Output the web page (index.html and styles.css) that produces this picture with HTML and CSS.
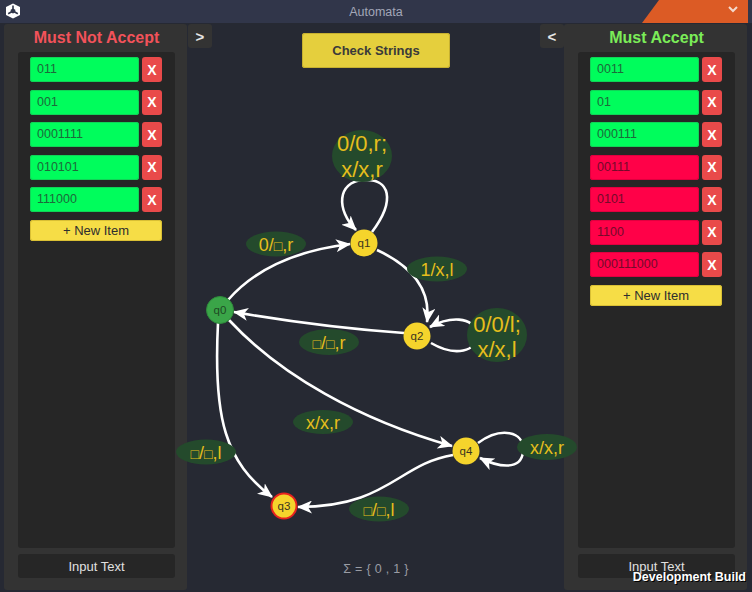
FILE: index.html
```html
<!DOCTYPE html>
<html>
<head>
<meta charset="utf-8">
<title>Automata</title>
<link rel="stylesheet" href="styles.css">
</head>
<body>
<div class="app">
  <header class="titlebar">
    <div class="tb-left">
      <svg class="logo" width="16" height="16" viewBox="0 0 16 16">
        <polygon points="8,0.5 15,4 15,12 8,15.5 1,12 1,4" fill="#ffffff"/>
        <polyline points="8,2.5 8,8 3.2,10.8" fill="none" stroke="#30364a" stroke-width="1.6"/>
        <line x1="8" y1="8" x2="12.8" y2="10.8" stroke="#30364a" stroke-width="1.6"/>
        <polygon points="8,5.5 10.3,6.8 10.3,9.3 8,10.6 5.7,9.3 5.7,6.8" fill="#30364a"/>
      </svg>
    </div>
    <div class="tb-title">Automata</div>
    <div class="tb-right">
      <div class="corner">
        <svg width="12" height="8" viewBox="0 0 12 8"><polyline points="2,2 6,6 10,2" fill="none" stroke="#f4d9cc" stroke-width="2"/></svg>
      </div>
    </div>
  </header>

  <main class="main">
    <section class="panel">
      <h2 class="panel-title reject">Must Not Accept</h2>
      <div class="list">
        <div class="item"><span class="field ok">011</span><button class="del">X</button></div>
        <div class="item"><span class="field ok">001</span><button class="del">X</button></div>
        <div class="item"><span class="field ok">0001111</span><button class="del">X</button></div>
        <div class="item"><span class="field ok">010101</span><button class="del">X</button></div>
        <div class="item"><span class="field ok">111000</span><button class="del">X</button></div>
        <button class="new-item">+ New Item</button>
      </div>
      <button class="input-text">Input Text</button>
    </section>

    <button class="toggle">&gt;</button>

    <div class="center">
      <button class="check">Check Strings</button>
      <div class="sigma">Σ = { 0 , 1 }</div>
    </div>

    <button class="toggle">&lt;</button>

    <section class="panel">
      <h2 class="panel-title accept">Must Accept</h2>
      <div class="list">
        <div class="item"><span class="field ok">0011</span><button class="del">X</button></div>
        <div class="item"><span class="field ok">01</span><button class="del">X</button></div>
        <div class="item"><span class="field ok">000111</span><button class="del">X</button></div>
        <div class="item"><span class="field bad">00111</span><button class="del">X</button></div>
        <div class="item"><span class="field bad">0101</span><button class="del">X</button></div>
        <div class="item"><span class="field bad">1100</span><button class="del">X</button></div>
        <div class="item"><span class="field bad">000111000</span><button class="del">X</button></div>
        <button class="new-item">+ New Item</button>
      </div>
      <button class="input-text">Input Text</button>
    </section>
  </main>

  <svg class="graph" width="752" height="592" viewBox="0 0 752 592">
    <defs>
      <marker id="arr" markerUnits="userSpaceOnUse" markerWidth="15" markerHeight="13" refX="14" refY="6.5" orient="auto">
        <path d="M0,0 L15,6.5 L0,13 L4,6.5 Z" fill="#ffffff"/>
      </marker>
    </defs>
    <g fill="none" stroke="#ffffff" stroke-width="2.6" marker-end="url(#arr)">
      <path d="M228 300 Q268 254 350 244"/>
      <path d="M372 232 C396 200 390 178 363 180 C337 182 336 210 356 230"/>
      <path d="M377 250 Q433 276 427 322"/>
      <path d="M431 343 C455 357 478 352 476 334 C474 315 448 317 430 327"/>
      <path d="M404 333 Q320 327 234 312"/>
      <path d="M229 320 C280 375 360 420 452 446"/>
      <path d="M218 323 C213 420 226 462 272 497"/>
      <path d="M478 443 C500 427 525 430 523 452 C521 471 498 467 480 458"/>
      <path d="M453 455 C398 464 388 507 298 507"/>
    </g>

    <g class="lbl">
      <ellipse cx="362" cy="156" rx="30" ry="26"/>
      <text x="362" y="151" class="big">0/0,r;</text>
      <text x="362" y="177" class="big">x/x,r</text>

      <ellipse cx="497" cy="335" rx="30" ry="27"/>
      <text x="497" y="332" class="big">0/0/l;</text>
      <text x="497" y="357" class="big">x/x,l</text>

      <ellipse cx="276" cy="244" rx="30" ry="12.5"/>
      <text x="276" y="251">0/<tspan class="sq">□</tspan>,r</text>

      <ellipse cx="437" cy="269" rx="30" ry="12.5"/>
      <text x="437" y="276">1/x,l</text>

      <ellipse cx="329" cy="342" rx="30" ry="13"/>
      <text x="329" y="349"><tspan class="sq">□</tspan>/<tspan class="sq">□</tspan>,r</text>

      <ellipse cx="323" cy="422" rx="30" ry="12"/>
      <text x="323" y="429">x/x,r</text>

      <ellipse cx="206" cy="452" rx="30" ry="12.5"/>
      <text x="206" y="459"><tspan class="sq">□</tspan>/<tspan class="sq">□</tspan>,l</text>

      <ellipse cx="547" cy="447" rx="30" ry="13"/>
      <text x="547" y="454">x/x,r</text>

      <ellipse cx="379" cy="509" rx="30" ry="12.5"/>
      <text x="379" y="516"><tspan class="sq">□</tspan>/<tspan class="sq">□</tspan>,l</text>
    </g>

    <g class="nodes">
      <circle cx="220" cy="310" r="13.5" fill="#3aa548" stroke="#2f8a3c" stroke-width="1"/>
      <text x="220" y="314" class="q0">q0</text>
      <circle cx="364" cy="243" r="13.5" fill="#f5d42c"/>
      <text x="364" y="247">q1</text>
      <circle cx="417" cy="336" r="13.5" fill="#f5d42c"/>
      <text x="417" y="340">q2</text>
      <circle cx="284" cy="506" r="12.5" fill="#f5d42c" stroke="#e8231e" stroke-width="2"/>
      <text x="284" y="510">q3</text>
      <circle cx="466" cy="451" r="13.5" fill="#f5d42c"/>
      <text x="466" y="455">q4</text>
    </g>
  </svg>

  <div class="devbuild">Development Build</div>
</div>
</body>
</html>
```

FILE: styles.css
```css
* { box-sizing: border-box; }
html, body { margin: 0; padding: 0; }
body {
  width: 752px;
  height: 592px;
  overflow: hidden;
  background: #262933;
  font-family: "Liberation Sans", Arial, sans-serif;
  color: #ddd;
}
button { font: inherit; border: none; padding: 0; cursor: pointer; }

.app { position: relative; width: 752px; height: 592px; display: flex; flex-direction: column; }

.titlebar {
  height: 23px;
  background: #31364a;
  display: grid;
  grid-template-columns: 1fr auto 1fr;
  align-items: stretch;
}
.tb-left { display: flex; align-items: center; padding-left: 5px; }
.logo { display: block; margin-top: -1px; }
.tb-title { display: flex; align-items: center; font-size: 12.5px; color: #a3a7b8; }
.tb-right { display: flex; justify-content: flex-end; padding-right: 4px; }
.corner {
  width: 106px;
  background: #dc5b25;
  clip-path: polygon(17px 0, 100% 0, 100% 100%, 0 100%);
  display: flex;
  align-items: center;
  justify-content: flex-end;
  padding-right: 9px;
  padding-bottom: 5px;
}
.corner svg { display: block; }

.main {
  flex: 1;
  display: flex;
  padding: 1px 5px 2px 4px;
}

.panel {
  width: 183px;
  background: #333333;
  border-radius: 3px;
  display: flex;
  flex-direction: column;
  padding: 0 12px 12px 14px;
}
.panel-title {
  margin: 0;
  height: 28px;
  line-height: 28px;
  text-align: center;
  font-size: 16px;
  font-weight: bold;
}
.reject { color: #f2525a; }
.accept { color: #7bec58; }

.list {
  flex: 1;
  background: #262626;
  border-radius: 3px;
  padding: 5px 13px 0 12px;
  display: flex;
  flex-direction: column;
  gap: 7.5px;
}
.item { display: flex; gap: 3px; height: 25px; }
.field {
  width: 109px;
  border-radius: 3px;
  padding-left: 7px;
  font-size: 12.5px;
  line-height: 25px;
}
.field.ok { background: #00fd5c; color: #1d6a3a; box-shadow: inset 0 0 0 1px #10d457; }
.field.bad { background: #ff0148; color: #740a2a; box-shadow: inset 0 0 0 1px #e0003f; }
.del {
  width: 20px;
  background: #e94a4a;
  color: #ffffff;
  font-weight: bold;
  font-size: 14px;
  border-radius: 3px;
}
.new-item {
  margin-top: 0.5px;
  height: 21px;
  background: #f6dd46;
  color: #2e2e2e;
  font-size: 13px;
  border-radius: 3px;
  box-shadow: inset 0 0 0 1px #d9bf34;
}
.input-text {
  margin-top: 6px;
  height: 24px;
  background: #262626;
  color: #e0e0e0;
  font-size: 13px;
  border-radius: 3px;
}

.toggle {
  width: 24px;
  height: 24px;
  background: #333333;
  color: #e6e6e6;
  font-size: 15px;
  font-weight: bold;
  border-radius: 3px;
}
.toggle:first-of-type { margin-left: 1px; }

.center {
  flex: 1;
  display: flex;
  flex-direction: column;
  align-items: center;
}
.check {
  margin-top: 9px;
  width: 148px;
  height: 35px;
  background: #e5cf3d;
  color: #3a3a3a;
  font-size: 13px;
  font-weight: bold;
  border-radius: 3px;
  box-shadow: inset 0 0 0 1px #c6b030;
}
.sigma {
  margin-top: auto;
  margin-bottom: 14px;
  font-size: 12.5px;
  color: #9a9ca4;
  letter-spacing: 0.3px;
}

.graph {
  position: absolute;
  left: 0;
  top: 0;
  pointer-events: none;
}
.lbl ellipse { fill: #244a2c; }
.lbl text {
  fill: #e6be1c;
  font-family: "Liberation Sans", Arial, sans-serif;
  font-size: 18px;
  text-anchor: middle;
}
.lbl text .sq { font-size: 14px; }
.lbl text.big { font-size: 22px; }
.nodes text {
  fill: #3a3520;
  font-family: "Liberation Sans", Arial, sans-serif;
  font-size: 11.5px;
  text-anchor: middle;
}
.nodes text.q0 { fill: #1e4a24; }

.devbuild {
  position: absolute;
  right: 6px;
  bottom: 8px;
  font-size: 12.5px;
  font-weight: bold;
  color: #ffffff;
  text-shadow: 1px 1px 0 #000;
}
```
